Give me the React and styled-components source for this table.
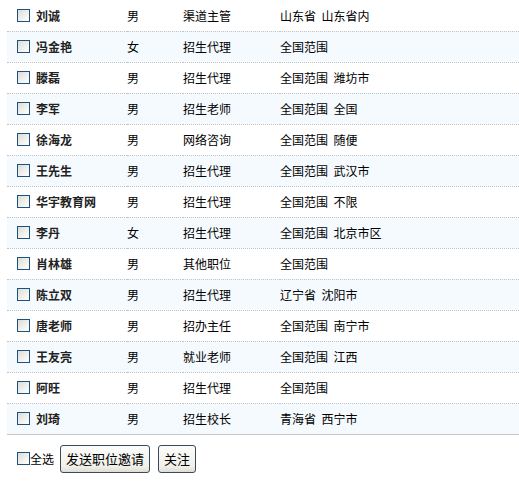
import React from 'react'
import styled, { createGlobalStyle } from 'styled-components'

const GlobalStyle = createGlobalStyle`
    body {
        margin: 0;
        background: #fff;
        font-family: "Noto Sans CJK SC", "Liberation Sans", sans-serif;
        font-size: 12px;
        color: #000;
    }
`;

const Page = styled.div`
    padding-left: 7px;
`;

const Table = styled.table`
    width: 100%;
    border-collapse: collapse;
`;

const Row = styled.tr`
    height: 31px;
    background: ${({ $alt }) => ($alt ? '#f5fafe' : '#fff')};
    border-bottom: ${({ $last }) => ($last ? '1px solid #c6c6c6' : '1px dotted #c2c2c2')};
`;

const Cell = styled.td`
    padding: 0;
    width: ${({ $w }) => $w || 'auto'};
    white-space: pre;
    vertical-align: middle;
`;

const NameWrap = styled.div`
    display: flex;
    align-items: center;
    padding-left: 10px;
    gap: 6px;
`;

const Name = styled.span`
    font-weight: bold;
    color: #222;
`;

const Check = styled.input.attrs({ type: 'checkbox' })`
    appearance: none;
    margin: 0;
    width: 13px;
    height: 13px;
    box-sizing: border-box;
    border: 1px solid #1c5180;
    background: linear-gradient(135deg, #dcdcd7 0%, #f2f2ee 60%, #ffffff 100%);
    flex: none;
`;

const Footer = styled.div`
    display: flex;
    align-items: center;
    padding: 10px 0 0 10px;
`;

const SelectAll = styled.label`
    display: flex;
    align-items: center;
    margin-right: 6px;
`;

const Button = styled.button`
    font-family: inherit;
    font-size: 13px;
    color: #000;
    height: 28px;
    padding: 0 5px;
    margin-right: 8px;
    border: 1px solid #3a4a5c;
    border-radius: 3px;
    background: linear-gradient(#fcfcfb, #f0efe8 80%, #dedcd2);
`;

const people = [
    ['刘诚', '男', '渠道主管', '山东省  山东省内'],
    ['冯金艳', '女', '招生代理', '全国范围'],
    ['滕磊', '男', '招生代理', '全国范围  潍坊市'],
    ['李军', '男', '招生老师', '全国范围  全国'],
    ['徐海龙', '男', '网络咨询', '全国范围  随便'],
    ['王先生', '男', '招生代理', '全国范围  武汉市'],
    ['华宇教育网', '男', '招生代理', '全国范围  不限'],
    ['李丹', '女', '招生代理', '全国范围  北京市区'],
    ['肖林雄', '男', '其他职位', '全国范围'],
    ['陈立双', '男', '招生代理', '辽宁省  沈阳市'],
    ['唐老师', '男', '招办主任', '全国范围  南宁市'],
    ['王友亮', '男', '就业老师', '全国范围  江西'],
    ['阿旺', '男', '招生代理', '全国范围'],
    ['刘琦', '男', '招生校长', '青海省  西宁市'],
];

const App = () => {
  return (
    <Page>
        <GlobalStyle />
        <Table>
            <tbody>
                {people.map(([name, sex, job, area], i) => (
                    <Row key={i} $alt={i % 2 === 1} $last={i === people.length - 1}>
                        <Cell $w="120px">
                            <NameWrap>
                                <Check />
                                <Name>{name}</Name>
                            </NameWrap>
                        </Cell>
                        <Cell $w="56px">{sex}</Cell>
                        <Cell $w="97px">{job}</Cell>
                        <Cell>{area}</Cell>
                    </Row>
                ))}
            </tbody>
        </Table>
        <Footer>
            <SelectAll>
                <Check />
                全选
            </SelectAll>
            <Button>发送职位邀请</Button>
            <Button>关注</Button>
        </Footer>
    </Page>
  )
}

export default App
